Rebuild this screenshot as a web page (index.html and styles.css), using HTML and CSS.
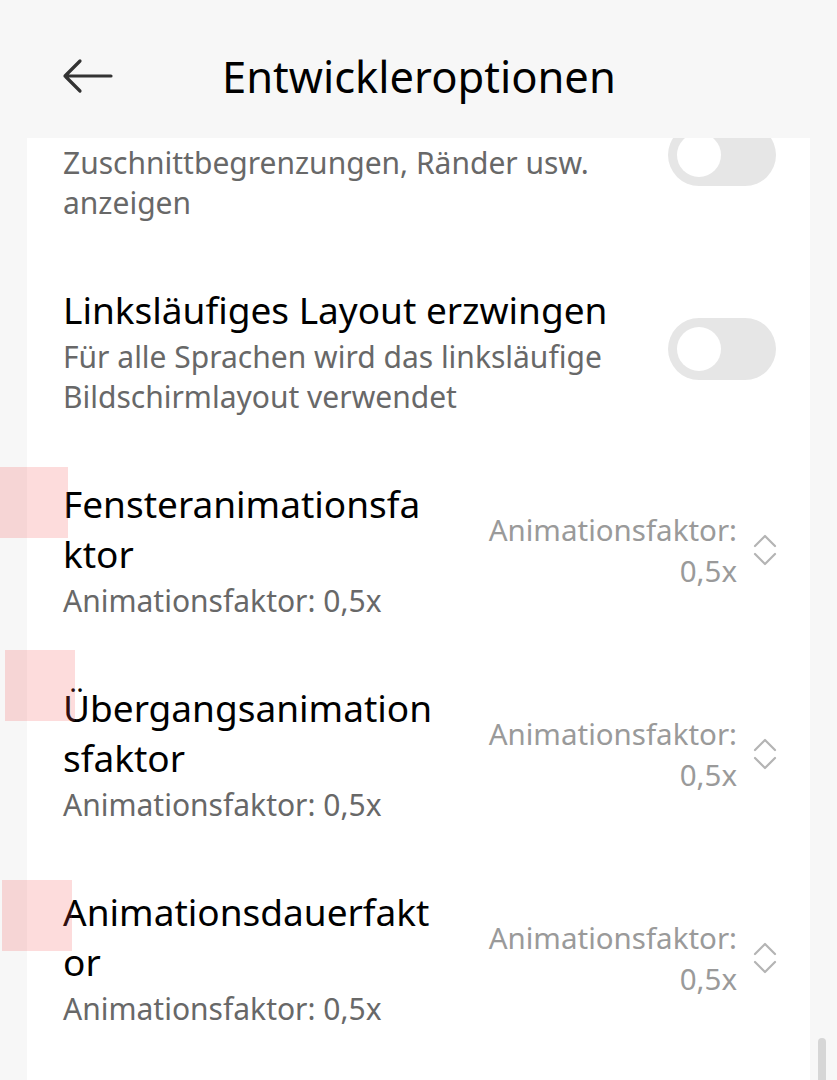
FILE: index.html
```html
<!DOCTYPE html>
<html lang="de">
<head>
    <meta charset="UTF-8">
    <meta name="viewport" content="width=device-width, initial-scale=1.0">
    <title>Entwickleroptionen</title>
    <link rel="stylesheet" href="styles.css">
</head>
<body>

<div class="header">
    <svg class="back" width="52" height="36" viewBox="0 0 52 36">
        <path d="M49 18 H3 M18 3 L3 18 L18 33" fill="none" stroke="#333" stroke-width="3.2" stroke-linecap="round" stroke-linejoin="round"/>
    </svg>
    <h1>Entwickleroptionen</h1>
</div>

<div class="card">
    <div class="list">
        <!-- first row is scrolled up under the header -->
        <div class="row">
            <div class="text">
                <div class="title scrolled-off">Layoutgrenzen einblenden</div>
                <div class="summary">Zuschnittbegrenzungen, Ränder usw. anzeigen</div>
            </div>
            <div class="toggle"><span class="knob"></span></div>
        </div>

        <div class="row">
            <div class="text">
                <div class="title">Linksläufiges Layout erzwingen</div>
                <div class="summary">Für alle Sprachen wird das linksläufige Bildschirmlayout verwendet</div>
            </div>
            <div class="toggle"><span class="knob"></span></div>
        </div>

        <div class="row">
            <div class="text narrow">
                <div class="title">Fensteranimationsfaktor</div>
                <div class="summary">Animationsfaktor: 0,5x</div>
            </div>
            <div class="value">
                <span>Animationsfaktor:<br>0,5x</span>
                <svg class="spinner" width="24" height="34" viewBox="0 0 24 34">
                    <path d="M2 13 L12 3 L22 13 M2 21 L12 31 L22 21" fill="none" stroke="#b4b4b4" stroke-width="2.2" stroke-linecap="round" stroke-linejoin="round"/>
                </svg>
            </div>
        </div>

        <div class="row">
            <div class="text narrow">
                <div class="title">Übergangsanimationsfaktor</div>
                <div class="summary">Animationsfaktor: 0,5x</div>
            </div>
            <div class="value">
                <span>Animationsfaktor:<br>0,5x</span>
                <svg class="spinner" width="24" height="34" viewBox="0 0 24 34">
                    <path d="M2 13 L12 3 L22 13 M2 21 L12 31 L22 21" fill="none" stroke="#b4b4b4" stroke-width="2.2" stroke-linecap="round" stroke-linejoin="round"/>
                </svg>
            </div>
        </div>

        <div class="row">
            <div class="text narrow">
                <div class="title">Animationsdauerfaktor</div>
                <div class="summary">Animationsfaktor: 0,5x</div>
            </div>
            <div class="value">
                <span>Animationsfaktor:<br>0,5x</span>
                <svg class="spinner" width="24" height="34" viewBox="0 0 24 34">
                    <path d="M2 13 L12 3 L22 13 M2 21 L12 31 L22 21" fill="none" stroke="#b4b4b4" stroke-width="2.2" stroke-linecap="round" stroke-linejoin="round"/>
                </svg>
            </div>
        </div>
    </div>
</div>

<div class="scrollbar"></div>

<div class="mark mark-1"></div>
<div class="mark mark-2"></div>
<div class="mark mark-3"></div>

</body>
</html>
```

FILE: styles.css
```css
body {
    margin: 0;
    height: 1080px;
    overflow: hidden;
    background: #f7f7f7;
    font-family: 'Noto Sans', 'Roboto', sans-serif;
    color: #000;
    position: relative;
}

.header {
    height: 138px;
    display: flex;
    align-items: center;
    padding-left: 62px;
    padding-top: 14px;
    box-sizing: border-box;
}

.back {
    display: block;
}

h1 {
    margin: 0 0 0 108px;
    font-size: 43.5px;
    line-height: 50px;
    font-weight: 400;
}

.card {
    margin: 0 27px;
    background: #fff;
    height: 942px;
    overflow: hidden;
}

.list {
    margin-top: -78px;
    padding: 0 34px 0 36px;
}

.row {
    display: flex;
    align-items: center;
    justify-content: space-between;
    padding: 31px 0;
}

.text {
    flex: 1;
    min-width: 0;
}

.text.narrow {
    flex: none;
    width: 374px;
}

.title {
    font-size: 37px;
    line-height: 50px;
    word-break: break-all;
}

.scrolled-off {
    visibility: hidden;
}

.summary {
    margin-top: 2px;
    font-size: 30px;
    line-height: 40px;
    color: #686868;
    padding-right: 30px;
}

.text.narrow .summary {
    padding-right: 0;
    white-space: nowrap;
}

.toggle {
    width: 108px;
    height: 62px;
    border-radius: 31px;
    background: #e6e6e6;
    position: relative;
    flex: none;
    margin-top: -4px;
}

.knob {
    position: absolute;
    left: 9px;
    top: 9px;
    width: 44px;
    height: 44px;
    border-radius: 50%;
    background: #fff;
}

.value {
    display: flex;
    align-items: center;
    gap: 16px;
    text-align: right;
    font-size: 29.5px;
    line-height: 41px;
    color: #9a9a9a;
}

.spinner {
    display: block;
    margin-right: -1px;
}

.scrollbar {
    position: absolute;
    left: 818px;
    top: 1038px;
    width: 8px;
    height: 60px;
    border-radius: 4px;
    background: #d6d6d6;
}

.mark {
    position: absolute;
    width: 70px;
    height: 71px;
    background: rgba(245, 80, 80, 0.2);
}

.mark-1 { left: 0; top: 467px; width: 68px; }
.mark-2 { left: 5px; top: 650px; }
.mark-3 { left: 2px; top: 880px; }
```
